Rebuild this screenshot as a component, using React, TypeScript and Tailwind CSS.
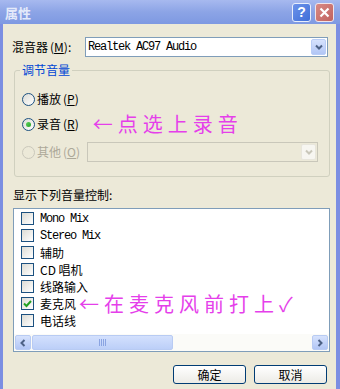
import React from "react";

const CJK = "font-['SimSun','Noto_Sans_CJK_SC',sans-serif]";
const MONO = "font-['Liberation_Mono','Noto_Sans_CJK_SC',monospace]";

function Radio({ checked = false, disabled = false }: { checked?: boolean; disabled?: boolean }) {
  return (
    <span
      className={
        "relative flex h-[13px] w-[13px] shrink-0 items-center justify-center rounded-full border " +
        (disabled
          ? "border-[#cac8bb] bg-[#ece9d8]"
          : "border-[#1c5180] bg-gradient-to-br from-[#dcdcd5] to-[#ffffff]")
      }
    >
      {checked && (
        <span className="h-[5px] w-[5px] rounded-full bg-gradient-to-br from-[#5fd35f] to-[#21a121]" />
      )}
    </span>
  );
}

function Check({ checked = false }: { checked?: boolean }) {
  return (
    <span className="flex h-[13px] w-[13px] shrink-0 items-center justify-center border border-[#1c5180] bg-gradient-to-br from-[#dcdcd5] to-[#ffffff]">
      {checked && (
        <svg width="9" height="9" viewBox="0 0 9 9">
          <path d="M1 4.5 L3.5 7 L8 2" stroke="#21a121" strokeWidth="2" fill="none" />
        </svg>
      )}
    </span>
  );
}

function ComboArrow({ disabled = false }: { disabled?: boolean }) {
  return (
    <span
      className={
        "flex h-[16px] w-[15px] items-center justify-center rounded-[2px] border " +
        (disabled
          ? "border-[#e8e6dc] bg-[#f7f6f1]"
          : "border-[#b9cdf7] bg-gradient-to-b from-[#d6e2fd] to-[#b2c6f5]")
      }
    >
      <svg width="8" height="6" viewBox="0 0 8 6">
        <path
          d="M1 1.5 L4 4.5 L7 1.5"
          stroke={disabled ? "#c9c7ba" : "#4d6185"}
          strokeWidth="2"
          fill="none"
        />
      </svg>
    </span>
  );
}

function Acc({ c }: { c: string }) {
  return (
    <span className="ml-[2px]">
      (<span className="underline underline-offset-1">{c}</span>)
    </span>
  );
}

const items: { label: string; mono?: boolean; checked?: boolean; note?: boolean }[] = [
  { label: "Mono Mix", mono: true },
  { label: "Stereo Mix", mono: true },
  { label: "辅助" },
  { label: "CD 唱机" },
  { label: "线路输入" },
  { label: "麦克风", checked: true, note: true },
  { label: "电话线" },
];

export default function App() {
  return (
    <div className={"flex h-[389px] w-[340px] flex-col overflow-hidden bg-[#7b8ee2] text-[12px] text-black " + CJK}>
      {/* Title bar */}
      <div className="flex h-[24px] shrink-0 items-center bg-gradient-to-b from-[#a7b9ef] via-[#8ca4e6] to-[#7e99e2] pl-[5px] pr-[6px]">
        <span className="text-[13px] font-bold leading-none text-[#e4eafa]">属性</span>
        <div className="ml-auto flex items-center gap-[4px]">
          <span className="flex h-[19px] w-[19px] items-center justify-center rounded-[3px] border border-[#e8eefc] bg-gradient-to-br from-[#6d93ea] to-[#3f6ed8] text-[14px] font-bold leading-none text-white font-['Liberation_Sans',sans-serif]">
            ?
          </span>
          <span className="flex h-[19px] w-[19px] items-center justify-center rounded-[3px] border border-[#f0e4ea] bg-gradient-to-br from-[#d98a86] to-[#c0625f]">
            <svg width="11" height="11" viewBox="0 0 11 11">
              <path d="M1.5 1.5 L9.5 9.5 M9.5 1.5 L1.5 9.5" stroke="white" strokeWidth="2.2" />
            </svg>
          </span>
        </div>
      </div>

      <div className="flex flex-1">
        <div className="w-[3px] shrink-0" />
        {/* Client area */}
        <div className="flex flex-1 flex-col bg-[#ece9d8] pl-[10px] pr-[8px] pt-[13px]">
          {/* Mixer row */}
          <div className="flex h-[20px] items-center">
            <span className="ml-[-1px] leading-none">
              混音器<Acc c="M" />:
            </span>
            <div className="ml-auto flex h-[20px] w-[243px] items-center border border-[#7f9db9] bg-white pl-[2px] pr-[1px]">
              <span className={"tracking-[-1.2px] leading-none " + MONO}>Realtek AC97 Audio</span>
              <span className="ml-auto">
                <ComboArrow />
              </span>
            </div>
          </div>

          {/* Group box */}
          <div className="relative ml-[1px] mr-[-2px] mt-[13px] h-[107px] rounded-[3px] border border-[#d0d0bf] pl-[7px] pr-[11px] pt-[18px]">
            <span className="absolute left-[5px] top-[-8px] bg-[#ece9d8] px-[2px] leading-[14px] text-[#0046d5]">
              调节音量
            </span>
            <div className="flex h-[20px] items-center">
              <Radio />
              <span className="ml-[2px] leading-none">
                播放<Acc c="P" />
              </span>
            </div>
            <div className="mt-[5px] flex h-[20px] items-center">
              <Radio checked />
              <span className="ml-[2px] leading-none">
                录音<Acc c="R" />
              </span>
              <span className="ml-[14px] whitespace-nowrap text-[20px] leading-none tracking-[5px] text-[#e53fea]">←点选上录音</span>
            </div>
            <div className="mt-[8px] flex h-[20px] items-center">
              <Radio disabled />
              <span className="ml-[2px] leading-none text-[#aca899]">
                其他<Acc c="O" />
              </span>
              <div className="ml-auto flex h-[20px] w-[231px] items-center justify-end border border-[#c9c7ba] pr-[1px]">
                <ComboArrow disabled />
              </div>
            </div>
          </div>

          <div className="mt-[11px] leading-[14px]">显示下列音量控制:</div>

          {/* List box */}
          <div className="mr-[-2px] mt-[6px] flex h-[144px] flex-col border border-[#7f9db9] bg-white">
            <div className="pl-[7px] pt-[1px]">
              {items.map((it) => (
                <div key={it.label} className="flex h-[17px] items-center">
                  <Check checked={it.checked} />
                  <span className={"ml-[6px] whitespace-nowrap leading-none " + (it.mono ? "tracking-[-1.2px] " + MONO : "")}>
                    {it.label}
                  </span>
                  {it.note && (
                    <span className="ml-[3px] whitespace-nowrap text-[20px] leading-none tracking-[5px] text-[#e53fea]">
                      ←在麦克风前打上✓
                    </span>
                  )}
                </div>
              ))}
            </div>
            {/* Horizontal scrollbar */}
            <div className="mt-auto flex h-[17px] items-center bg-[#fbfbf8] px-[1px]">
              <span className="flex h-[15px] w-[16px] items-center justify-center rounded-[2px] border border-[#b8cbf3] bg-gradient-to-b from-[#d6e2fd] to-[#b2c6f5]">
                <svg width="6" height="8" viewBox="0 0 6 8">
                  <path d="M4.5 1 L1.5 4 L4.5 7" stroke="#4d6185" strokeWidth="2" fill="none" />
                </svg>
              </span>
              <span className="ml-[1px] flex h-[15px] w-[141px] items-center justify-center rounded-[2px] border border-[#b8cbf3] bg-gradient-to-b from-[#d3e0fd] to-[#bccff8]">
                <svg width="8" height="7" viewBox="0 0 8 7">
                  <path d="M0.5 0 V7 M2.5 0 V7 M4.5 0 V7 M6.5 0 V7" stroke="#8aa4e2" strokeWidth="1" />
                </svg>
              </span>
              <span className="ml-auto flex h-[15px] w-[16px] items-center justify-center rounded-[2px] border border-[#b8cbf3] bg-gradient-to-b from-[#d6e2fd] to-[#b2c6f5]">
                <svg width="6" height="8" viewBox="0 0 6 8">
                  <path d="M1.5 1 L4.5 4 L1.5 7" stroke="#4d6185" strokeWidth="2" fill="none" />
                </svg>
              </span>
            </div>
          </div>

          {/* Buttons */}
          <div className="mt-[13px] flex justify-end gap-[8px] pr-[1px]">
            <button className="flex h-[19px] w-[73px] items-center justify-center rounded-[3px] border border-[#003c74] bg-gradient-to-b from-[#ffffff] to-[#ecebe6] leading-none">
              确定
            </button>
            <button className="flex h-[19px] w-[73px] items-center justify-center rounded-[3px] border border-[#003c74] bg-gradient-to-b from-[#ffffff] to-[#ecebe6] leading-none">
              取消
            </button>
          </div>
        </div>
        <div className="w-[4px] shrink-0" />
      </div>
    </div>
  );
}
